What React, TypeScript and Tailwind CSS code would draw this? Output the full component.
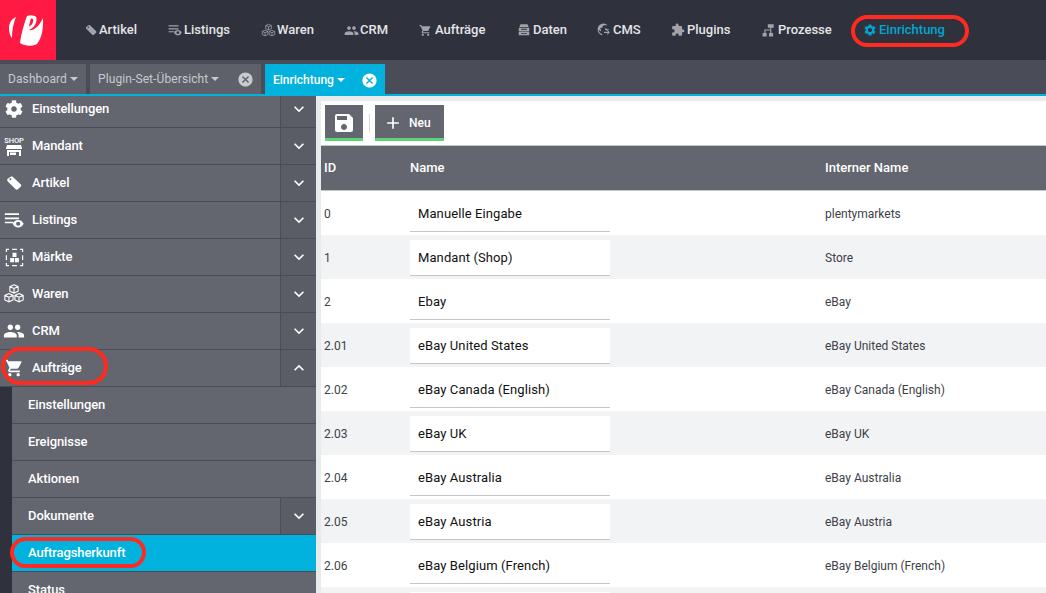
import { MdAdd, MdCancel, MdExpandLess, MdExpandMore, MdExtension, MdPeople, MdSave, MdSettings, MdShoppingCart } from 'react-icons/md';
import { FaCog } from 'react-icons/fa';
import type { ReactNode } from 'react';

function Logo() {
  return (
    <svg viewBox="0 0 56 60" className="w-[56px] h-[60px]" fill="white">
      <path d="M16 17C11 19 9 24 9 28C9 32 10 36 12 38C12 31 13 24 16 17Z" />
      <path
        fillRule="evenodd"
        d="M27 16C30 14.500 36 15 36.500 18C37 23 34 28 29 30C33 31 39 27 43 18C43.500 28 42 38 37 44C32 47 25 46 20 43C21 34 24 24 27 16ZM31 18.500C33 18 33.500 20 33 22C32.500 24 31 26 29 26.500C29.500 24 30 21 31 18.500Z"
      />
    </svg>
  );
}

function TagIcon({ className }: { className?: string }) {
  return (
    <svg viewBox="0 0 24 24" className={className} fill="currentColor">
      <path
        fillRule="evenodd"
        d="M2 6L7 2.500C8 2 9 2 10 2.500L22 14C23 15 23 16 22.500 17L18 21.500C17 22.500 15.500 22.500 14.500 21.500L3 10C2 9 1.500 7 2 6ZM6.500 5A1.500 1.500 0 1 0 6.600 8A1.500 1.500 0 0 0 6.500 5Z"
      />
    </svg>
  );
}

function ListingsIcon({ className }: { className?: string }) {
  return (
    <svg viewBox="0 0 24 24" className={className} fill="currentColor">
      <path d="M1 4h17v2H1zM1 9h17v2H1zM1 14h10v2H1z" />
      <path d="M17 12c-3 0-5.500 2-6.500 4.500C11.500 19 14 21 17 21s5.500-2 6.500-4.500C22.500 14 20 12 17 12zm0 7a2.500 2.500 0 1 1 0-5 2.500 2.500 0 0 1 0 5z" />
    </svg>
  );
}

function BoxesIcon({ className }: { className?: string }) {
  return (
    <svg viewBox="0 0 24 24" className={className} fill="none" stroke="currentColor" strokeWidth="1.200">
      <path d="M12 2l4.500 2v5L12 11 7.500 9V4zM7.500 4L12 6l4.500-2M12 6v5" />
      <path d="M6.500 11.500l4.500 2v5l-4.500 2-4.500-2v-5zM2 13.500l4.500 2 4.500-2M6.500 15.500v5" />
      <path d="M17.500 11.500l4.500 2v5l-4.500 2-4.500-2v-5zM13 13.500l4.500 2 4.500-2M17.500 15.500v5" />
    </svg>
  );
}

function MaerkteIcon({ className }: { className?: string }) {
  return (
    <svg viewBox="0 0 24 24" className={className} fill="currentColor">
      <path d="M9.500 6h5v5.500h-5zM6.500 12.500h5V18h-5zM12.500 12.500h5V18h-5z" />
      <path d="M1 1h4v1.500H2.500V5H1zM19 1h4v4h-1.500V2.500H19zM1 9h1.500v6H1zM21.500 9H23v6h-1.500zM1 19h1.500v2.500H5V23H1zM21.500 19H23v4h-4v-1.500h2.500zM9 1h6v1.500H9zM9 21.500h6V23H9z" />
    </svg>
  );
}

function ShopIcon() {
  return (
    <span className="flex flex-col items-center w-[20px] text-white">
      <span className="text-[7.500px] leading-[7px] font-medium">SHOP</span>
      <svg viewBox="0 0 16 11" className="w-[16px] h-[11px] mt-[1px]" fill="currentColor">
        <path fillRule="evenodd" d="M1 0h14l1 3v1H0V3zM1 5h14v6h-2V7H3v4H1z" />
        <path d="M4 7.500h6V10H4z" />
      </svg>
    </span>
  );
}

function DatenIcon({ className }: { className?: string }) {
  return (
    <svg viewBox="0 0 24 24" className={className} fill="currentColor">
      <path d="M6 2h12l2 5H4z" />
      <path fillRule="evenodd" d="M3 8h18v6H3zM7 10v1.500h10V10zM3 15h18v6H3zM7 17v1.500h10V17z" />
    </svg>
  );
}

function CmsIcon({ className }: { className?: string }) {
  return (
    <svg viewBox="0 0 24 24" className={className} fill="currentColor">
      <path d="M11 1a10 10 0 0 0-2 19.800V19a8 8 0 0 1-6-7.500l4 3v-3L5 9l4-1 1-3 3-1h5A10 10 0 0 0 11 1z" />
      <path d="M14 9l3 1 4 1v1l-3-1-1 2-3-1zM12 15h7l-2-2 1-1 4 4-4 4-1-1 2-2h-7z" />
    </svg>
  );
}

function ProzesseIcon({ className }: { className?: string }) {
  return (
    <svg viewBox="0 0 24 24" className={className} fill="currentColor">
      <path d="M10 2h10v6h-4v3h-2V8h-4z" />
      <path d="M14 11v2H6v4H4v-6zM14 11h2v6h-2z" />
      <path d="M1 17h7v6H1zM12 17h7v6h-7z" />
    </svg>
  );
}

const navItems: { label: string; width: string; icon: ReactNode }[] = [
  { label: 'Artikel', width: 'w-[85px]', icon: <TagIcon className="w-[12px] h-[12px] ml-[2px]" /> },
  { label: 'Listings', width: 'w-[93px]', icon: <ListingsIcon className="w-[14px] h-[14px]" /> },
  { label: 'Waren', width: 'w-[83px]', icon: <BoxesIcon className="w-[15px] h-[15px]" /> },
  { label: 'CRM', width: 'w-[75px]', icon: <MdPeople className="w-[15px] h-[15px]" /> },
  { label: 'Aufträge', width: 'w-[98px]', icon: <MdShoppingCart className="w-[13px] h-[13px]" /> },
  { label: 'Daten', width: 'w-[80px]', icon: <DatenIcon className="w-[14px] h-[14px]" /> },
  { label: 'CMS', width: 'w-[74px]', icon: <CmsIcon className="w-[14px] h-[14px]" /> },
  { label: 'Plugins', width: 'w-[91px]', icon: <MdExtension className="w-[14px] h-[14px]" /> },
  { label: 'Prozesse', width: 'w-[101px]', icon: <ProzesseIcon className="w-[14px] h-[14px]" /> },
];

const sideItems: { label: string; icon: ReactNode; open?: boolean; first?: boolean }[] = [
  { label: 'Einstellungen', icon: <FaCog className="w-[18px] h-[18px]" />, first: true },
  { label: 'Mandant', icon: <ShopIcon /> },
  { label: 'Artikel', icon: <TagIcon className="w-[16px] h-[16px]" /> },
  { label: 'Listings', icon: <ListingsIcon className="w-[20px] h-[20px]" /> },
  { label: 'Märkte', icon: <MaerkteIcon className="w-[19px] h-[19px]" /> },
  { label: 'Waren', icon: <BoxesIcon className="w-[22px] h-[22px]" /> },
  { label: 'CRM', icon: <MdPeople className="w-[22px] h-[22px]" /> },
  { label: 'Aufträge', icon: <MdShoppingCart className="w-[20px] h-[20px]" />, open: true },
];

const rows = [
  ['0', 'Manuelle Eingabe', 'plentymarkets'],
  ['1', 'Mandant (Shop)', 'Store'],
  ['2', 'Ebay', 'eBay'],
  ['2.01', 'eBay United States', 'eBay United States'],
  ['2.02', 'eBay Canada (English)', 'eBay Canada (English)'],
  ['2.03', 'eBay UK', 'eBay UK'],
  ['2.04', 'eBay Australia', 'eBay Australia'],
  ['2.05', 'eBay Austria', 'eBay Austria'],
  ['2.06', 'eBay Belgium (French)', 'eBay Belgium (French)'],
  ['', '', ''],
];

function Tab({ label, close, active, width }: { label: string; close?: boolean; active?: boolean; width: string }) {
  return (
    <div className={`${width} flex items-center pl-[8px] pr-[7px] text-[12px] ${active ? 'bg-[#00b2dd] text-white font-medium h-[32px]' : 'bg-[#5e606a] text-[#c9cacd] tracking-[0.1px] h-[30px]'}`}>
      <span>{label}</span>
      <svg viewBox="0 0 8 4" className="w-[8px] h-[4px] ml-[3px]" fill="currentColor"><path d="M0 0h8L4 4z" /></svg>
      {close && <MdCancel className="ml-auto w-[17px] h-[17px]" />}
    </div>
  );
}

export default function App() {
  return (
    <div className="relative w-[1046px] h-[593px] overflow-hidden bg-white font-['Roboto',sans-serif]">
      <header className="h-[60px] bg-[#2f323c] flex items-center">
        <div className="w-[56px] h-[60px] bg-[#ff1a43]">
          <Logo />
        </div>
        <nav className="flex items-center pl-[27px] text-[13px] font-medium text-[#e4e5e7]">
          {navItems.map((item) => (
            <div key={item.label} className={`flex items-center ${item.width}`}>
              <span className="w-[16px] flex justify-start text-[#a3a4a9]">{item.icon}</span>
              <span>{item.label}</span>
            </div>
          ))}
          <div className="flex items-center text-[#00a6d2]">
            <span className="w-[16px] flex">
              <MdSettings className="w-[14px] h-[14px]" />
            </span>
            <span>Einrichtung</span>
          </div>
        </nav>
      </header>

      <div className="h-[36px] bg-[#4a4c58] border-b-2 border-[#00b2dd] flex items-start pt-[4px] gap-[4px]">
        <Tab label="Dashboard" width="w-[86px]" />
        <Tab label="Plugin-Set-Übersicht" close width="w-[171px]" />
        <Tab label="Einrichtung" close active width="w-[120px]" />
      </div>

      <div className="flex h-[497px]">
        <aside className="w-[316px] shrink-0 bg-[#63656f] overflow-hidden text-white text-[13px] font-medium tracking-[-0.1px]">
          {sideItems.map((item) => (
            <div key={item.label} className={`flex border-b border-[#4a4c58] ${item.first ? 'h-[32px]' : 'h-[37px]'}`}>
              <div className={`flex-1 flex items-center ${item.first ? 'pb-[6px]' : ''}`}>
                <span className="w-[32px] flex justify-center shrink-0 pr-[4px]">{item.icon}</span>
                <span>{item.label}</span>
              </div>
              <div className={`w-[36px] flex items-center justify-center bg-[#5a5c66] border-l border-[#4a4c58] ${item.first ? 'pb-[6px]' : ''}`}>
                {item.open ? <MdExpandLess className="w-[20px] h-[20px]" /> : <MdExpandMore className="w-[20px] h-[20px]" />}
              </div>
            </div>
          ))}
          <div className="border-l-[12px] border-[#2f323c]">
            {['Einstellungen', 'Ereignisse', 'Aktionen'].map((label) => (
              <div key={label} className="h-[37px] flex items-center pl-[16px] border-b border-[#4a4c58]">{label}</div>
            ))}
            <div className="h-[37px] flex border-b border-[#4a4c58]">
              <div className="flex-1 flex items-center pl-[16px]">Dokumente</div>
              <div className="w-[36px] flex items-center justify-center bg-[#5a5c66] border-l border-[#4a4c58]">
                <MdExpandMore className="w-[20px] h-[20px]" />
              </div>
            </div>
            <div className="h-[37px] flex items-center pl-[16px] bg-[#00b2dd] border-b border-[#4a4c58]">Auftragsherkunft</div>
            <div className="h-[37px] flex items-center pl-[16px] border-b border-[#4a4c58]">Status</div>
          </div>
        </aside>

        <main className="flex-1 bg-[#e9eaec] pt-[5px] pl-[5px] overflow-hidden">
          <div className="h-[44px] bg-white flex items-start pt-[4px] pl-[4px]">
            <button className="w-[38px] h-[36px] bg-[#63656f] border-b-[3px] border-[#5cd577] flex items-center justify-center pt-[2px] text-white">
              <MdSave className="w-[24px] h-[24px]" />
            </button>
            <span className="w-px h-[18px] bg-[#d8d9db] mt-[9px] mx-[5.500px]" />
            <button className="w-[69px] h-[36px] bg-[#63656f] border-b-[3px] border-[#5cd577] flex items-center pl-[8px] pt-[2px] gap-[6px] text-white text-[12px] font-medium">
              <MdAdd className="w-[20px] h-[20px]" />
              Neu
            </button>
          </div>
          <div className="h-[46px] bg-[#63656f] border-y border-[#c4c5c9] flex items-center text-[13px] font-medium text-white">
            <span className="w-[89px] pl-[3px]">ID</span>
            <span className="w-[415px]">Name</span>
            <span>Interner Name</span>
          </div>
          {rows.map((row, i) => (
            <div key={i} className={`h-[44px] flex items-center pt-[2px] text-[12px] text-[#3d3f48] ${i % 2 ? 'bg-[#f2f3f5]' : 'bg-white'}`}>
              <span className="w-[89px] pl-[3px] shrink-0">{row[0]}</span>
              <div className="w-[200px] h-[36px] bg-white border-b border-[#c4c5c9] flex items-center pl-[8px] text-[13px] tracking-[0.1px] text-[#111] shrink-0">{row[1]}</div>
              <span className="ml-[215px]">{row[2]}</span>
            </div>
          ))}
        </main>
      </div>

      {/* red marker rings */}
      <div className="absolute left-[851px] top-[15px] w-[118px] h-[32px] rounded-full border-[4px] border-[#ff2a20]" />
      <div className="absolute left-[1px] top-[347px] w-[107px] h-[38px] rounded-full border-[4px] border-[#ff2a20]" />
      <div className="absolute left-[10px] top-[537px] w-[136px] h-[31px] rounded-full border-[4px] border-[#ff2a20]" />
    </div>
  );
}
